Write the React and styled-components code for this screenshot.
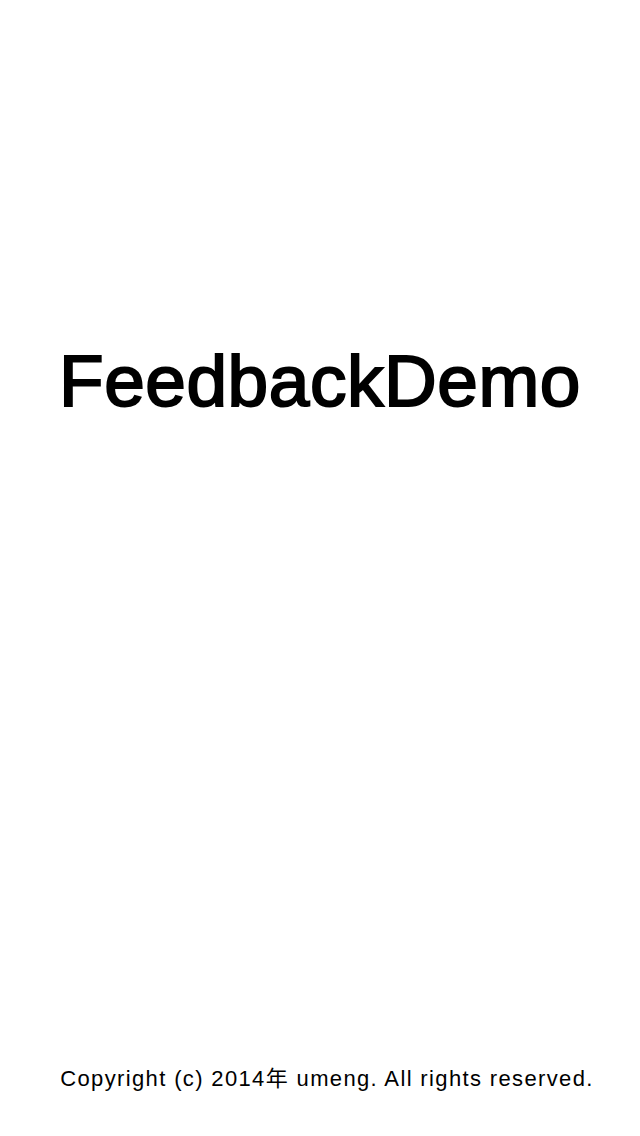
import styled, { createGlobalStyle } from "styled-components";

const GlobalStyle = createGlobalStyle`
  html, body {
    margin: 0;
    padding: 0;
    background: #fff;
  }
`;

const Screen = styled.div`
  height: 1136px;
  display: flex;
  flex-direction: column;
  align-items: center;
  background: #fff;
  color: #000;
  font-family: "Liberation Sans", "Noto Sans CJK SC", sans-serif;
`;

const Title = styled.h1`
  margin: 344px 0 0;
  font-size: 73px;
  line-height: 1;
  font-weight: 400;
  -webkit-text-stroke: 2px #000;
  letter-spacing: 0.55px;
`;

const Footer = styled.p`
  margin: auto 0 0;
  padding: 0 0 46px 14px;
  font-size: 22px;
  line-height: 1;
  letter-spacing: 1.36px;
`;

const App = () => {
  return (
    <>
      <GlobalStyle />
      <Screen>
        <Title>FeedbackDemo</Title>
        <Footer>Copyright (c) 2014年 umeng. All rights reserved.</Footer>
      </Screen>
    </>
  );
};

export default App;
